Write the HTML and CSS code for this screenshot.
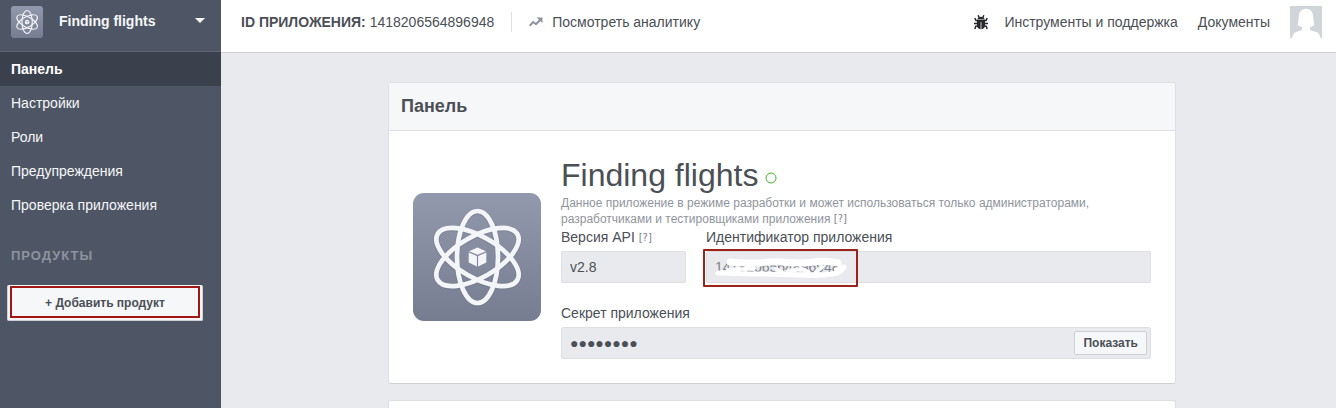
FILE: index.html
```html
<!DOCTYPE html>
<html lang="ru">
<head>
<meta charset="utf-8">
<title>Finding flights</title>
<link rel="stylesheet" href="styles.css">
</head>
<body>
<svg class="defs" width="0" height="0" aria-hidden="true">
  <defs>
    <linearGradient id="tile" x1="0" y1="0" x2="0" y2="1"><stop offset="0" stop-color="#9299ac"/><stop offset="1" stop-color="#767d91"/></linearGradient>
    <symbol id="atom" viewBox="0 0 128 128">
      <rect width="128" height="128" rx="11" fill="url(#tile)"/>
      <g fill="none" stroke="#666d80" stroke-opacity=".25" stroke-width="6.400">
        <ellipse cx="64.500" cy="64.500" rx="20.500" ry="46"/>
        <ellipse cx="64.500" cy="64.500" rx="20.500" ry="46" transform="rotate(60 64.5 64.5)"/>
        <ellipse cx="64.500" cy="64.500" rx="20.500" ry="46" transform="rotate(-60 64.5 64.5)"/>
      </g>
      <g fill="none" stroke="#f4f5f8" stroke-width="4.700">
        <ellipse cx="64.500" cy="64" rx="20.500" ry="46"/>
        <ellipse cx="64.500" cy="64" rx="20.500" ry="46" transform="rotate(60 64.5 64)"/>
        <ellipse cx="64.500" cy="64" rx="20.500" ry="46" transform="rotate(-60 64.5 64)"/>
      </g>
      <path fill="#f4f5f7" d="M64.500 54.500 73 58.200 64.500 61.700 56 58.200zM55.700 59.500 63.900 63V73.500L55.700 69.500zM73.300 59.500 65.100 63V73.500L73.300 69.500z"/>
    </symbol>
  </defs>
</svg>
<div class="app">
  <aside class="sidebar">
    <button class="app-switch" type="button">
      <svg class="app-switch-icon" aria-hidden="true"><use href="#atom"/></svg>
      <span class="app-switch-name">Finding flights</span>
      <svg class="caret" viewBox="0 0 10 5" aria-hidden="true"><path d="M0 0h10L5 5z"/></svg>
    </button>
    <nav class="nav">
      <a class="nav-link nav-link-active" href="#">Панель</a>
      <a class="nav-link" href="#">Настройки</a>
      <a class="nav-link" href="#">Роли</a>
      <a class="nav-link" href="#">Предупреждения</a>
      <a class="nav-link" href="#">Проверка приложения</a>
    </nav>
    <h2 class="nav-title">ПРОДУКТЫ</h2>
    <button class="add-product" type="button"><span class="add-product-label">+ Добавить продукт</span></button>
  </aside>
  <div class="content">
    <header class="topbar">
      <div class="app-id"><strong>ID ПРИЛОЖЕНИЯ:</strong> 1418206564896948</div>
      <a class="analytics" href="#">
        <svg class="trend" viewBox="0 0 14 10" aria-hidden="true"><path fill="none" stroke="#8d949e" stroke-width="2" d="M.7 8.700 4.200 5 7 7.200 11.500 2.500"/><path fill="#8d949e" d="M7.500.500H13.500V6z"/></svg>
        Посмотреть аналитику
      </a>
      <div class="topbar-links">
        <a class="tools" href="#">
          <svg class="bug" viewBox="0 0 14 15" aria-hidden="true">
            <path fill="none" stroke="#26282b" stroke-width="1.500" d="M4.200.3 5 2.500M9.800.3 9 2.500M.8 3 2 5.600H12L13.200 3M0 8.500H14M.9 14 1.700 11.300 4 10.700M13.100 14 12.300 11.300 10 10.700"/>
            <path fill="#26282b" d="M3.600 4C3.600.9 10.400.9 10.400 4zM3 4.800H11V10.500C11 15.500 3 15.500 3 10.500z"/>
            <path stroke="#aeb0b4" stroke-width="1.200" d="M7 7V14"/>
            <path stroke="#8f9296" stroke-width=".8" d="M3.500 4.400H10.500"/>
          </svg>
          Инструменты и поддержка
        </a>
        <a href="#">Документы</a>
        <svg class="avatar" viewBox="0 0 32 32" role="img" aria-label="Профиль">
          <path fill="#d0d5da" d="M0 0H32V32H0z"/>
          <path fill="#fff" d="M16 2.800C11.500 2.800 9 6 8.800 10.500 8.600 14.500 8 17 7.800 19 9 20.400 10.500 20.700 12 20.700V23.500C11 25 7.500 25.300 5 26.500 3.300 27.500 2.500 29.500 2 32H30.500C30 29.500 29.200 27.500 27.500 26.500 25 25.300 21 25 20 23.500V20.700C21.500 20.700 23 20.400 24.200 19 24 17 23.400 14.500 23.200 10.500 23 6 20.500 2.800 16 2.800z"/>
        </svg>
      </div>
    </header>
    <main class="page">
      <section class="card">
        <h1 class="card-title">Панель</h1>
        <div class="card-body">
          <svg class="app-icon" aria-hidden="true"><use href="#atom"/></svg>
          <div class="details">
            <h2 class="app-name">Finding flights <svg class="status" viewBox="0 0 12 12" role="img" aria-label="В разработке"><circle cx="6" cy="6" r="5"/></svg></h2>
            <p class="note">Данное приложение в режиме разработки и может использоваться только администраторами, разработчиками и тестировщиками приложения <a class="help" href="#">[?]</a></p>
            <div class="fields">
              <div class="field">
                <div class="label"><label for="api">Версия API</label> <a class="help" href="#">[?]</a></div>
                <input class="input" id="api" type="text" value="v2.8" readonly>
              </div>
              <div class="field">
                <label class="label" for="appid">Идентификатор приложения</label>
                <div class="masked">
                  <input class="input input-muted" id="appid" type="text" value="1418206564896948" readonly>
                  <svg class="smudge" viewBox="0 0 140 24" aria-hidden="true">
                    <g fill="none" stroke="#fff" stroke-linecap="round" stroke-linejoin="round">
                      <path stroke-width="7" d="M20 7C28 8 34 8 44 8S62 6 72 7 92 9 104 7 124 7 128 8"/>
                      <path stroke-width="5" d="M8 18C20 18 36 19 52 19S74 20 88 20 112 21 122 19 132 15 134 12"/>
                      <path stroke-width="4" d="M18 15 30 14M34 14 44 13M66 14 72 17M78 16 92 14 98 17M106 17 112 12M126 15 132 12"/>
                    </g>
                  </svg>
                  <span class="outline"></span>
                </div>
              </div>
            </div>
            <div class="field">
              <label class="label" for="secret">Секрет приложения</label>
              <div class="input secret">
                <input class="secret-value" id="secret" type="text" value="●●●●●●●●" readonly>
                <button class="show" type="button">Показать</button>
              </div>
            </div>
          </div>
        </div>
      </section>
      <section class="card card-next"></section>
    </main>
  </div>
</div>
</body>
</html>
```

FILE: styles.css
```css
* { box-sizing: border-box; }
body {
  margin: 0;
  background: #e9eaed;
  color: #4b4f56;
  font: 14px/20px "Liberation Sans", Arial, sans-serif;
}
a { color: inherit; text-decoration: none; }
h1, h2, p { margin: 0; }
button, input { font: inherit; color: inherit; }
button { cursor: pointer; }
.defs { position: absolute; }
.app { display: flex; height: 100vh; overflow: hidden; }

.sidebar { flex: 0 0 221px; background: #4e5665; color: #f6f7f9; }
.app-switch {
  display: flex;
  align-items: center;
  width: 100%;
  height: 52px;
  padding: 0 16px 8px 11px;
  border: 0;
  border-bottom: 1px solid #5f6776;
  background: none;
  text-align: left;
}
.app-switch-icon { width: 32px; height: 32px; margin-right: 16px; border-radius: 2px; }
.app-switch-name { flex: 1; padding-bottom: 2px; font-weight: bold; }
.caret { width: 10px; height: 7px; padding-bottom: 2px; fill: #fff; }
.nav-link { display: block; padding: 7px 11px; }
.nav-link-active { background: #3b404d; color: #fff; font-weight: bold; }
.nav-title {
  padding: 24px 11px 19px;
  color: #8d949e;
  font-size: 13px;
  letter-spacing: 1px;
}
.add-product {
  display: block;
  width: 196px;
  height: 36px;
  margin-left: 7px;
  padding: 1px 2px 2px;
  border: 1px solid #ced0d4;
  border-top: 0;
  border-radius: 2px;
  background: #f6f7f9;
  color: #4b4f56;
  font-size: 12px;
  font-weight: bold;
}
.add-product-label {
  display: block;
  padding-top: 2px;
  border: 2px solid #a41515;
  line-height: 26px;
}

.content { flex: 1; min-width: 0; }
.topbar {
  display: flex;
  align-items: center;
  height: 53px;
  padding: 0 14px 8px 20px;
  border-bottom: 1px solid #ced0d4;
  background: #fff;
}
.analytics {
  display: flex;
  align-items: center;
  gap: 9px;
  margin-left: 17px;
  padding-left: 17px;
  border-left: 1px solid #dddfe2;
}
.trend { width: 14px; height: 10px; }
.topbar-links { display: flex; align-items: center; gap: 20px; margin-left: auto; }
.tools { display: flex; align-items: center; gap: 16px; }
.bug { width: 14px; height: 15px; }
.avatar { width: 32px; height: 32px; }

.page { padding: 29px 20px 0 27px; }
.card {
  max-width: 788px;
  margin: 0 auto 16px;
  border: 1px solid #dddfe2;
  border-bottom-color: #ced0d4;
  border-radius: 3px;
  background: #fff;
}
.card-next { height: 80px; }
.card-title {
  padding: 12px;
  border-bottom: 1px solid #dddfe2;
  border-radius: 2px 2px 0 0;
  background: #f6f7f9;
  font-size: 18px;
  line-height: 23px;
}
.card-body { display: flex; align-items: center; gap: 20px; padding: 24px; }
.app-icon { flex: none; width: 128px; height: 128px; }
.details { flex: 1; min-width: 0; }
.app-name { font-size: 32px; font-weight: normal; line-height: 40px; }
.status { width: 12px; height: 12px; margin-left: -2px; vertical-align: 2px; fill: none; stroke: #42b72a; }
.note { color: #90949c; font-size: 12px; line-height: 16px; }
.help { color: #7f838b; font: 10px/10px "DejaVu Sans", sans-serif; vertical-align: 1px; }
.fields { display: grid; grid-template-columns: 125px 1fr; gap: 20px; margin-bottom: 20px; }
.label { display: block; margin-bottom: 4px; }
.input {
  display: block;
  width: 100%;
  height: 32px;
  padding: 0 8px;
  border: 1px solid #dddfe2;
  border-radius: 2px;
  background: #e9eaed;
  outline: 0;
}
.input-muted { color: #7f838b; }
.masked { position: relative; }
.smudge { position: absolute; top: 4px; left: 4px; width: 140px; height: 24px; }
.outline {
  position: absolute;
  top: -2px;
  left: -3px;
  width: 155px;
  height: 38px;
  border: 2px solid #9c2318;
  border-radius: 1px;
}
.secret { display: flex; align-items: center; padding-right: 3px; }
.secret-value {
  flex: 1;
  min-width: 0;
  padding: 0;
  border: 0;
  background: none;
  outline: 0;
}
.show {
  height: 24px;
  padding: 0 8px;
  border: 1px solid #ced0d4;
  border-radius: 2px;
  background: #f6f7f9;
  font-size: 12px;
  font-weight: bold;
}
```
